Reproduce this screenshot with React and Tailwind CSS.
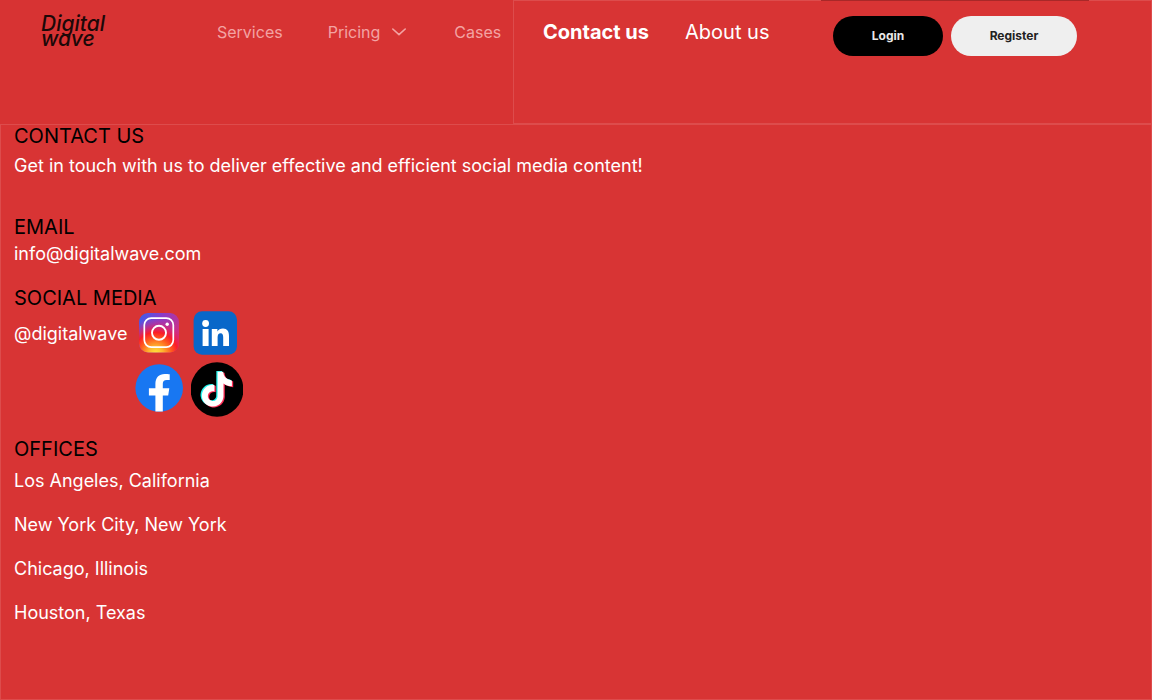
import React from 'react';

const OFFICES = [
  'Los Angeles, California',
  'New York City, New York',
  'Chicago, Illinois',
  'Houston, Texas',
];

const TIKTOK_NOTE =
  'M12.525.02c1.31-.02 2.61-.01 3.91-.02.08 1.53.63 3.09 1.75 4.17 1.12 1.11 2.7 1.62 4.24 1.79v4.03c-1.44-.05-2.89-.35-4.2-.97-.57-.26-1.1-.59-1.62-.93-.01 2.92.01 5.84-.02 8.75-.08 1.4-.54 2.79-1.35 3.94-1.31 1.92-3.58 3.17-5.91 3.21-1.43.08-2.86-.31-4.08-1.03-2.02-1.19-3.44-3.37-3.65-5.71-.02-.5-.03-1-.01-1.49.18-1.9 1.12-3.72 2.58-4.96 1.66-1.44 3.98-2.13 6.15-1.72.02 1.48-.04 2.96-.04 4.44-.99-.32-2.15-.23-3.02.37-.63.41-1.11 1.04-1.36 1.75-.21.51-.15 1.07-.14 1.61.24 1.64 1.82 3.02 3.5 2.87 1.12-.01 2.19-.66 2.77-1.61.19-.33.4-.67.41-1.06.1-1.79.06-3.57.07-5.36.01-4.03-.01-8.05.02-12.07z';

function InstagramIcon() {
  return (
    <svg viewBox="0 0 40 40" className="size-10" aria-hidden="true">
      <defs>
        <linearGradient id="ig-sky" x1="0" y1="0" x2="1" y2="0.6">
          <stop offset="0" stopColor="#3560f0" />
          <stop offset="0.45" stopColor="#8a3cc8" />
          <stop offset="1" stopColor="#d62f7c" />
        </linearGradient>
        <radialGradient id="ig-sun" cx="0.42" cy="1.04" r="0.95">
          <stop offset="0" stopColor="#ffee3c" />
          <stop offset="0.2" stopColor="#ffb52e" />
          <stop offset="0.42" stopColor="#ff5a1f" />
          <stop offset="0.58" stopColor="#fb1d28" />
          <stop offset="0.76" stopColor="#e0246a" stopOpacity="0.6" />
          <stop offset="0.95" stopColor="#c030a0" stopOpacity="0" />
        </radialGradient>
      </defs>
      <rect width="40" height="39.5" rx="9" fill="url(#ig-sky)" />
      <rect width="40" height="39.5" rx="9" fill="url(#ig-sun)" />
      <rect x="5.3" y="5.1" width="29" height="29" rx="7" fill="none" stroke="#fff" strokeWidth="1.7" />
      <circle cx="20" cy="19.8" r="7" fill="none" stroke="#fff" strokeWidth="1.9" />
      <circle cx="28.2" cy="11.2" r="1.7" fill="#fff" />
    </svg>
  );
}

function LinkedinIcon() {
  return (
    <svg viewBox="0 0 44 44" className="size-11" aria-hidden="true">
      <rect x="0.6" y="0.3" width="43.4" height="43.4" rx="8.5" fill="#0967c9" />
      <circle cx="12.6" cy="12.5" r="3.4" fill="#fff" />
      <path d="M9.6 18h6v17h-6z" fill="#fff" />
      <path
        d="M18.8 18h5.6v2.5c1-1.8 3-3 5.6-3 4.2 0 6 2.8 6 7.4V35h-5.8v-8.6c0-2.5-.5-4.2-2.6-4.2s-3 1.6-3 4.1V35h-5.8z"
        fill="#fff"
      />
    </svg>
  );
}

function FacebookIcon() {
  return (
    <svg viewBox="0 0 48 48" className="size-12" aria-hidden="true">
      <circle cx="24.2" cy="24" r="23.8" fill="#1877f2" />
      <path
        d="M20.400 47.600V31.500h-6.500V24.300h6.500v-4.500c0-6.400 3.600-9.900 9.300-9.900 2 0 3.800.2 5 .4v5.800h-2.900c-3 0-4 1.600-4 3.700v4.500h6.500l-1.100 7.200h-5.400v16.100z"
        fill="#fff"
      />
    </svg>
  );
}

function TiktokIcon() {
  return (
    <svg viewBox="0 0 52 55" className="h-[55px] w-[52px]" aria-hidden="true">
      <ellipse cx="26" cy="27.5" rx="26.4" ry="27.2" fill="#000" />
      <g transform="translate(8.6 9.8) scale(1.44 1.45)">
        <path d={TIKTOK_NOTE} fill="#25f4ee" transform="translate(-.9 -.5)" />
        <path d={TIKTOK_NOTE} fill="#fe2c55" transform="translate(.9 .6)" />
        <path d={TIKTOK_NOTE} fill="#fff" />
      </g>
    </svg>
  );
}

function Heading({ children }) {
  return <h2 className="text-xl leading-6 text-black">{children}</h2>;
}

export default function App() {
  return (
    <div className="flex min-h-screen flex-col bg-[#d83434] font-['Inter',sans-serif] text-lg leading-6 text-white">
      <header className="grid min-h-31 grid-cols-[513fr_639fr]">
        <div className="flex items-start bg-[#d73333]">
          <a
            href="#home"
            className="mt-4 ml-[41px] w-44 text-[21px] leading-[15px] font-medium text-[#1c0808] italic"
          >
            Digital
            <br />
            wave
          </a>
          <nav aria-label="Main" className="mt-5 flex items-center text-base leading-6 text-[#f3a3a3]">
            <a href="#services">Services</a>
            <button type="button" className="ml-[45px] flex items-center gap-3">
              Pricing
              <svg viewBox="0 0 14 8" className="h-2 w-3.5" fill="none" stroke="currentColor" strokeWidth="1.6" aria-hidden="true">
                <path d="M.8 1 7 6.700 13.200 1" strokeLinecap="round" strokeLinejoin="round" />
              </svg>
            </button>
            <a href="#cases" className="ml-12">Cases</a>
          </nav>
        </div>
        <div className="flex items-start border border-[#dd4c4c]">
          <nav aria-label="Company" className="mt-[19px] ml-[29px] flex gap-9 text-xl leading-6">
            <a href="#contact" aria-current="page" className="font-bold">Contact us</a>
            <a href="#about">About us</a>
          </nav>
          <div className="-mt-px mr-[62px] ml-auto flex gap-2 border-t border-[#a82828] px-3 pt-[15px] text-xs font-bold">
            <button type="button" className="h-10 w-[110px] rounded-full bg-black text-[#e8e8e8]">Login</button>
            <button type="button" className="h-10 w-[126px] rounded-full bg-[#efefef] text-[#222]">Register</button>
          </div>
        </div>
      </header>

      <main className="grow border border-[#dd4c4c] px-[13px]">
        <section className="-mt-px">
          <Heading>CONTACT US</Heading>
          <p className="mt-1.5">
            Get in touch with us to deliver effective and efficient social media content!
          </p>
        </section>
        <section className="mt-[37px]">
          <Heading>EMAIL</Heading>
          <a href="mailto:info@digitalwave.com" className="mt-[3px] block">info@digitalwave.com</a>
        </section>
        <section className="mt-5">
          <Heading>SOCIAL MEDIA</Heading>
          <div className="flex items-start gap-2">
            <p className="mt-3">@digitalwave</p>
            <div className="mt-px grid grid-cols-[48px_52px] items-center gap-x-2 gap-y-[7px]">
              <a href="#instagram" aria-label="Instagram" className="flex justify-center"><InstagramIcon /></a>
              <a href="#linkedin" aria-label="LinkedIn" className="flex pl-0.5"><LinkedinIcon /></a>
              <a href="#facebook" aria-label="Facebook" className="pb-1"><FacebookIcon /></a>
              <a href="#tiktok" aria-label="TikTok"><TiktokIcon /></a>
            </div>
          </div>
        </section>
        <section className="mt-5">
          <Heading>OFFICES</Heading>
          <ul className="mt-2 flex flex-col gap-5">
            {OFFICES.map((office) => (
              <li key={office}>{office}</li>
            ))}
          </ul>
        </section>
      </main>
    </div>
  );
}
